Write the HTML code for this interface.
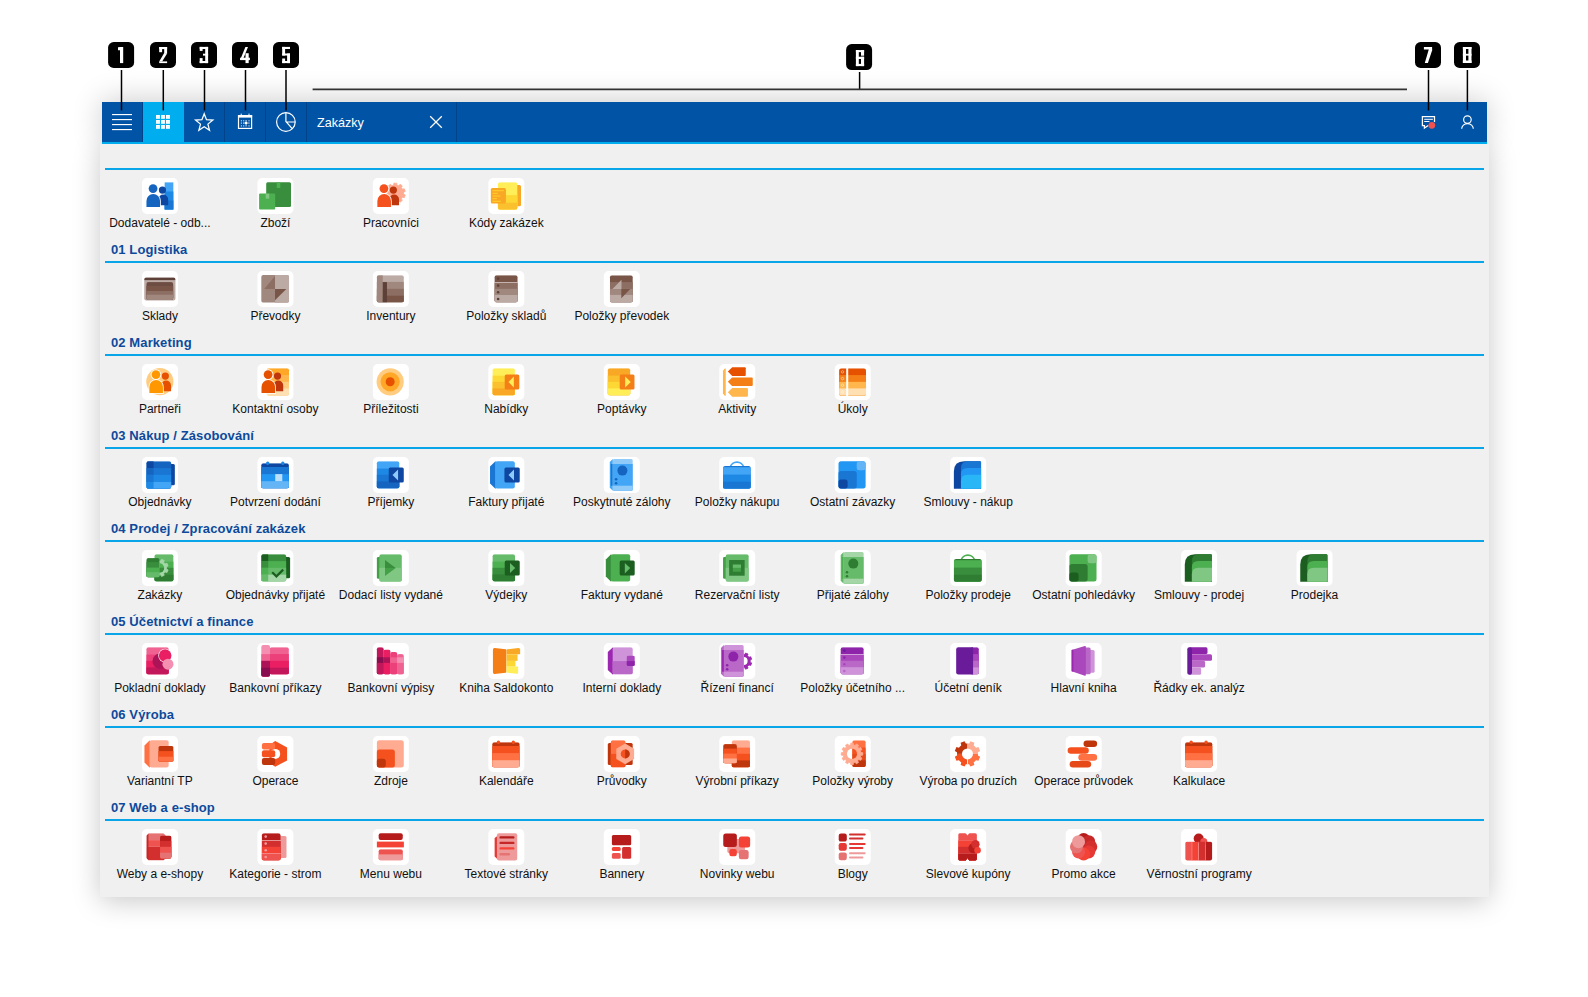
<!DOCTYPE html>
<html><head><meta charset="utf-8">
<style>
html,body{margin:0;padding:0;background:#fff;width:1588px;height:997px;overflow:hidden;position:relative;font-family:"Liberation Sans",sans-serif;}
.win{position:absolute;left:100px;top:144px;width:1389px;height:753px;background:#f0f0f0;box-shadow:0 4px 26px rgba(0,0,0,0.22);}
.win2{position:absolute;left:102px;top:102px;width:1385px;height:42px;box-shadow:0 -2px 30px rgba(0,0,0,0.2);}
.bar{position:absolute;left:102px;top:102px;width:1385px;height:40px;background:#0053a5;border-bottom:2px solid #00aeef;}
.st{position:absolute;left:111px;font-weight:bold;font-size:13px;color:#0c4a9c;letter-spacing:0.1px;white-space:nowrap;line-height:15px;}
.sl{position:absolute;left:105px;width:1379px;height:2px;background:#08a6e8;}
.it{position:absolute;width:38px;height:36px;}
.it svg{display:block}
.lb{position:absolute;width:120px;text-align:center;font-size:12px;color:#111;white-space:nowrap;line-height:14px;}
</style></head><body>
<div class="win2"></div><div class="win"></div>

<div class="bar">
 <div style="position:absolute;left:41px;top:0;width:41px;height:40px;background:#00aeef"></div>
 <div style="position:absolute;left:40px;top:0;width:1px;height:40px;background:#00438a"></div>
 <div style="position:absolute;left:122px;top:0;width:1px;height:40px;background:#00438a"></div>
 <div style="position:absolute;left:163px;top:0;width:1px;height:40px;background:#00438a"></div>
 <div style="position:absolute;left:204px;top:0;width:1px;height:40px;background:#00438a"></div>
 <div style="position:absolute;left:354px;top:0;width:1px;height:40px;background:#00438a"></div>
 <div style="position:absolute;left:215px;top:14px;font-size:12.6px;color:#fff;line-height:15px">Zakázky</div>
</div>
<svg style="position:absolute;left:0;top:0" width="1588" height="150" viewBox="0 0 1588 150"><rect x="112" y="114.0" width="20" height="1.15" fill="#fff"/><rect x="112" y="119.0" width="20" height="1.15" fill="#fff"/><rect x="112" y="124.0" width="20" height="1.15" fill="#fff"/><rect x="112" y="129.0" width="20" height="1.15" fill="#fff"/><rect x="156" y="115" width="3.9" height="3.8" fill="#fff"/><rect x="157.4" y="116.3" width="1.2" height="1.2" fill="#d8f0fb"/><rect x="156" y="120" width="3.9" height="3.8" fill="#fff"/><rect x="157.4" y="121.3" width="1.2" height="1.2" fill="#d8f0fb"/><rect x="156" y="125" width="3.9" height="3.8" fill="#fff"/><rect x="157.4" y="126.3" width="1.2" height="1.2" fill="#d8f0fb"/><rect x="161" y="115" width="3.9" height="3.8" fill="#fff"/><rect x="162.4" y="116.3" width="1.2" height="1.2" fill="#d8f0fb"/><rect x="161" y="120" width="3.9" height="3.8" fill="#fff"/><rect x="162.4" y="121.3" width="1.2" height="1.2" fill="#d8f0fb"/><rect x="161" y="125" width="3.9" height="3.8" fill="#fff"/><rect x="162.4" y="126.3" width="1.2" height="1.2" fill="#d8f0fb"/><rect x="166" y="115" width="3.9" height="3.8" fill="#fff"/><rect x="167.4" y="116.3" width="1.2" height="1.2" fill="#d8f0fb"/><rect x="166" y="120" width="3.9" height="3.8" fill="#fff"/><rect x="167.4" y="121.3" width="1.2" height="1.2" fill="#d8f0fb"/><rect x="166" y="125" width="3.9" height="3.8" fill="#fff"/><rect x="167.4" y="126.3" width="1.2" height="1.2" fill="#d8f0fb"/><polygon points="204.20,113.80 206.49,119.74 212.85,120.09 207.91,124.11 209.55,130.26 204.20,126.80 198.85,130.26 200.49,124.11 195.55,120.09 201.91,119.74" fill="none" stroke="#fff" stroke-width="1.25" stroke-linejoin="miter"/><rect x="238.5" y="115.6" width="13.1" height="12.8" fill="none" stroke="#fff" stroke-width="1.2"/><rect x="238" y="115" width="14.1" height="2.6" fill="#fff"/><rect x="240.7" y="113.6" width="1" height="2" fill="#fff"/><rect x="248.5" y="113.6" width="1" height="2" fill="#fff"/><rect x="240.85" y="120.25" width="1.1" height="1.1" fill="#fff" opacity="0.85"/><rect x="243.14999999999998" y="120.25" width="1.1" height="1.1" fill="#fff" opacity="0.85"/><rect x="245.54999999999998" y="120.25" width="1.1" height="1.1" fill="#fff" opacity="0.85"/><rect x="248.45" y="120.25" width="1.1" height="1.1" fill="#fff" opacity="0.85"/><rect x="240.85" y="122.55" width="1.1" height="1.1" fill="#fff" opacity="0.85"/><rect x="243.14999999999998" y="122.55" width="1.1" height="1.1" fill="#fff" opacity="0.85"/><rect x="248.45" y="122.55" width="1.1" height="1.1" fill="#fff" opacity="0.85"/><rect x="240.85" y="125.35000000000001" width="1.1" height="1.1" fill="#fff" opacity="0.85"/><rect x="243.14999999999998" y="125.35000000000001" width="1.1" height="1.1" fill="#fff" opacity="0.85"/><rect x="245.54999999999998" y="125.35000000000001" width="1.1" height="1.1" fill="#fff" opacity="0.85"/><rect x="248.45" y="125.35000000000001" width="1.1" height="1.1" fill="#fff" opacity="0.85"/><circle cx="246.1" cy="123.1" r="1.4" fill="#fff"/><path d="M246.1 120.5 V125.7 M243.5 123.1 H248.7" stroke="#fff" stroke-width="0.6" opacity="0.7"/><circle cx="285.9" cy="122" r="9.3" fill="none" stroke="#fff" stroke-width="1.2"/><path d="M285.9 112.7 V121.5 L292.2 128.6 M285.9 122 H295.2" fill="none" stroke="#fff" stroke-width="1.2"/><path d="M430.2 116.2 L441.8 127.8 M441.8 116.2 L430.2 127.8" stroke="#fff" stroke-width="1.25"/><path d="M1428.2 125.5 L1424.4 128.1 V125.6 H1422.4 V116.6 H1434.5 V122" fill="none" stroke="#fff" stroke-width="1.25" stroke-linejoin="miter"/><rect x="1424.2" y="118.8" width="8.7" height="1" fill="#fff"/><rect x="1424.2" y="121" width="5.2" height="1" fill="#fff"/><circle cx="1431.8" cy="125.3" r="3.4" fill="#EF5350"/><circle cx="1467.4" cy="119.6" r="3.8" fill="none" stroke="#fff" stroke-width="1.2"/><path d="M1461.7 128.8 A5.8 5.2 0 0 1 1473.3 128.8" fill="none" stroke="#fff" stroke-width="1.2"/></svg>
<div class="sl" style="top:168px"></div>
<div class="it" style="left:141px;top:178px"><svg width="38" height="36" viewBox="0 0 38 36"><g transform="translate(0.95,0)"><rect width="36" height="36" rx="5" fill="#fff"/><clipPath id="c1"><rect x="22.7" y="4.2" width="8.7" height="27.5" rx="0"/></clipPath><g clip-path="url(#c1)"><rect x="21.70" y="4.20" width="10.70" height="27.50" rx="0" fill="#42A5F5"/><rect x="21.70" y="13.50" width="10.70" height="18.20" rx="0" fill="#1E88E5"/><rect x="21.70" y="22.50" width="10.70" height="9.20" rx="0" fill="#1976D2"/></g><circle cx="20.50" cy="12.10" r="3.60" fill="#0D47A1"/><path d="M16.4 27.2 V21.4 A4.8 4.8 0 0 1 26.2 21.4 V27.2 Z" fill="#0D47A1"/><circle cx="11.10" cy="10.60" r="5.30" fill="#fff"/><path d="M3.7 29.8 V22.9 A6.9 6.9 0 0 1 18.9 22.9 V29.8 Z" fill="#fff"/><circle cx="11.10" cy="10.60" r="4.40" fill="#1565C0"/><path d="M4.5 29.0 V22.9 A6.8 6.8 0 0 1 18.1 22.9 V29.0 Z" fill="#1565C0"/></g></svg></div>
<div class="lb" style="left:99.9px;top:216px">Dodavatelé - odb...</div>
<div class="it" style="left:257px;top:178px"><svg width="38" height="36" viewBox="0 0 38 36"><g transform="translate(0.41,0)"><rect width="36" height="36" rx="5" fill="#fff"/><rect x="8.80" y="4.20" width="24.80" height="24.80" rx="1.5" fill="#388E3C"/><rect x="19.30" y="4.20" width="3.60" height="5.80" rx="0" fill="#4CAF50"/><rect x="1.70" y="15.60" width="16.10" height="15.80" rx="1" fill="#4CAF50"/><rect x="8.30" y="15.60" width="3.50" height="5.10" rx="0" fill="#81C784"/></g></svg></div>
<div class="lb" style="left:215.4px;top:216px">Zboží</div>
<div class="it" style="left:372px;top:178px"><svg width="38" height="36" viewBox="0 0 38 36"><g transform="translate(0.87,0)"><rect width="36" height="36" rx="5" fill="#fff"/><polygon points="20.79,7.06 20.98,5.20 23.82,5.20 24.01,7.06 25.89,7.67 27.13,6.27 29.43,7.95 28.49,9.56 29.65,11.16 31.47,10.76 32.35,13.46 30.64,14.21 30.64,16.19 32.35,16.94 31.47,19.64 29.65,19.24 28.49,20.84 29.43,22.45 27.13,24.13 25.89,22.73 24.01,23.34 23.82,25.20 20.98,25.20 20.79,23.34 18.91,22.73 17.67,24.13 15.37,22.45 16.31,20.84 15.15,19.24 13.33,19.64 12.45,16.94 14.16,16.19 14.16,14.21 12.45,13.46 13.33,10.76 15.15,11.16 16.31,9.56 15.37,7.95 17.67,6.27 18.91,7.67" fill="#FFAB91" stroke="#FFAB91" stroke-width="0.8" stroke-linejoin="round"/><circle cx="20.50" cy="12.10" r="3.60" fill="#BF360C"/><path d="M16.4 27.2 V21.4 A4.8 4.8 0 0 1 26.2 21.4 V27.2 Z" fill="#BF360C"/><circle cx="11.10" cy="10.60" r="5.30" fill="#fff"/><path d="M3.7 29.8 V22.9 A6.9 6.9 0 0 1 18.9 22.9 V29.8 Z" fill="#fff"/><circle cx="11.10" cy="10.60" r="4.40" fill="#F4511E"/><path d="M4.5 29.0 V22.9 A6.8 6.8 0 0 1 18.1 22.9 V29.0 Z" fill="#F4511E"/></g></svg></div>
<div class="lb" style="left:330.9px;top:216px">Pracovníci</div>
<div class="it" style="left:488px;top:178px"><svg width="38" height="36" viewBox="0 0 38 36"><g transform="translate(0.33,0)"><rect width="36" height="36" rx="5" fill="#fff"/><rect x="26.00" y="7.00" width="6.70" height="21.20" rx="1.5" fill="#F9A825"/><clipPath id="c2"><rect x="9.6" y="4.2" width="19.4" height="27.5" rx="2"/></clipPath><g clip-path="url(#c2)"><rect x="8.60" y="4.20" width="21.40" height="27.50" rx="0" fill="#FFEE58"/><rect x="8.60" y="17.10" width="21.40" height="14.60" rx="0" fill="#FDD835"/><rect x="8.60" y="24.70" width="21.40" height="7.00" rx="0" fill="#FBC02D"/></g><rect x="2.50" y="10.00" width="15.10" height="15.40" rx="1.5" fill="#F9A825"/><rect x="3.30" y="10.80" width="13.50" height="13.80" rx="1" fill="#F9A825"/><rect x="4.20" y="12.00" width="11.30" height="1.20" rx="0" fill="#FFCA28"/><rect x="4.20" y="14.80" width="5.30" height="1.20" rx="0" fill="#FFCA28"/><rect x="4.20" y="17.40" width="7.80" height="1.20" rx="0" fill="#FFCA28"/><rect x="4.20" y="20.00" width="4.30" height="1.20" rx="0" fill="#FFCA28"/><rect x="4.20" y="22.70" width="8.30" height="1.20" rx="0" fill="#FFCA28"/></g></svg></div>
<div class="lb" style="left:446.3px;top:216px">Kódy zakázek</div>
<div class="st" style="top:242px">01 Logistika</div>
<div class="sl" style="top:261px"></div>
<div class="it" style="left:141px;top:271px"><svg width="38" height="36" viewBox="0 0 38 36"><g transform="translate(0.95,0)"><rect width="36" height="36" rx="5" fill="#fff"/><rect x="2.30" y="6.50" width="31.20" height="22.90" rx="2" fill="#BCAAA4"/><clipPath id="c3"><rect x="2.3" y="6.5" width="31.2" height="22.9" rx="2"/></clipPath><g clip-path="url(#c3)"><rect x="2.30" y="6.50" width="31.20" height="2.60" rx="0" fill="#5D4037"/></g><clipPath id="c4"><rect x="4.5" y="11.1" width="26.7" height="17.9" rx="2"/></clipPath><g clip-path="url(#c4)"><rect x="3.50" y="11.10" width="28.70" height="17.90" rx="0" fill="#6D4C41"/><rect x="3.50" y="15.00" width="28.70" height="14.00" rx="0" fill="#795548"/><rect x="3.50" y="20.00" width="28.70" height="9.00" rx="0" fill="#8D6E63"/><rect x="3.50" y="23.70" width="28.70" height="5.30" rx="0" fill="#A1887F"/></g></g></svg></div>
<div class="lb" style="left:99.9px;top:309px">Sklady</div>
<div class="it" style="left:257px;top:271px"><svg width="38" height="36" viewBox="0 0 38 36"><g transform="translate(0.41,0)"><rect width="36" height="36" rx="5" fill="#fff"/><clipPath id="c5"><rect x="3.9" y="4" width="27.700000000000003" height="27.7" rx="2"/></clipPath><g clip-path="url(#c5)"><rect x="2.90" y="4.00" width="29.70" height="27.70" rx="0" fill="#A1887F"/></g><clipPath id="c6"><rect x="3.9" y="4" width="27.7" height="27.7" rx="2"/></clipPath><g clip-path="url(#c6)"><rect x="17.60" y="3.00" width="14.40" height="29.00" rx="0" fill="#BCAAA4"/></g><polygon points="17.60,5.00 17.60,17.90 6.80,17.90" fill="#8D6E63"/><polygon points="17.60,17.90 28.90,17.90 17.60,29.20" fill="#795548"/></g></svg></div>
<div class="lb" style="left:215.4px;top:309px">Převodky</div>
<div class="it" style="left:372px;top:271px"><svg width="38" height="36" viewBox="0 0 38 36"><g transform="translate(0.87,0)"><rect width="36" height="36" rx="5" fill="#fff"/><clipPath id="c7"><rect x="4" y="4.2" width="26.9" height="27.2" rx="2"/></clipPath><g clip-path="url(#c7)"><rect x="3.00" y="4.20" width="28.90" height="27.20" rx="0" fill="#BCAAA4"/><rect x="3.00" y="10.90" width="28.90" height="20.50" rx="0" fill="#A1887F"/><rect x="3.00" y="17.80" width="28.90" height="13.60" rx="0" fill="#8D6E63"/><rect x="3.00" y="24.70" width="28.90" height="6.70" rx="0" fill="#795548"/></g><clipPath id="c8"><rect x="4" y="4.2" width="26.9" height="27.2" rx="2"/></clipPath><g clip-path="url(#c8)"><rect x="4.00" y="4.20" width="5.90" height="27.20" rx="0" fill="#A1887F"/><rect x="9.90" y="11.10" width="4.20" height="20.30" rx="0" fill="#5D4037"/></g></g></svg></div>
<div class="lb" style="left:330.9px;top:309px">Inventury</div>
<div class="it" style="left:488px;top:271px"><svg width="38" height="36" viewBox="0 0 38 36"><g transform="translate(0.33,0)"><rect width="36" height="36" rx="5" fill="#fff"/><clipPath id="c9"><rect x="6.3" y="4.2" width="22.9" height="27.2" rx="2"/></clipPath><g clip-path="url(#c9)"><rect x="5.30" y="4.20" width="24.90" height="27.20" rx="0" fill="#795548"/><rect x="5.30" y="11.20" width="24.90" height="20.20" rx="0" fill="#8D6E63"/><rect x="5.30" y="17.80" width="24.90" height="13.60" rx="0" fill="#A1887F"/><rect x="5.30" y="24.00" width="24.90" height="7.40" rx="0" fill="#BCAAA4"/></g><rect x="6.00" y="11.10" width="23.50" height="0.50" rx="0" fill="#fff"/><circle cx="9.80" cy="7.60" r="1.30" fill="#5D4037"/><circle cx="9.80" cy="14.60" r="1.30" fill="#5D4037"/><circle cx="9.80" cy="21.20" r="1.30" fill="#5D4037"/><circle cx="9.80" cy="28.00" r="1.30" fill="#5D4037"/></g></svg></div>
<div class="lb" style="left:446.3px;top:309px">Položky skladů</div>
<div class="it" style="left:603px;top:271px"><svg width="38" height="36" viewBox="0 0 38 36"><g transform="translate(0.79,0)"><rect width="36" height="36" rx="5" fill="#fff"/><clipPath id="c10"><rect x="6.2" y="4.3" width="22.7" height="27.2" rx="2"/></clipPath><g clip-path="url(#c10)"><rect x="5.20" y="4.30" width="24.70" height="27.20" rx="0" fill="#795548"/><rect x="5.20" y="11.10" width="24.70" height="20.40" rx="0" fill="#8D6E63"/><rect x="5.20" y="17.90" width="24.70" height="13.60" rx="0" fill="#A1887F"/><rect x="5.20" y="23.90" width="24.70" height="7.60" rx="0" fill="#BCAAA4"/></g><polygon points="17.70,8.80 17.70,17.90 8.70,17.90" fill="#BCAAA4"/><polygon points="17.50,17.90 26.50,17.90 17.50,27.20" fill="#795548"/></g></svg></div>
<div class="lb" style="left:561.8px;top:309px">Položky převodek</div>
<div class="st" style="top:335px">02 Marketing</div>
<div class="sl" style="top:354px"></div>
<div class="it" style="left:141px;top:364px"><svg width="38" height="36" viewBox="0 0 38 36"><g transform="translate(0.95,0)"><rect width="36" height="36" rx="5" fill="#fff"/><circle cx="17.90" cy="17.60" r="13.60" fill="#FFCC80"/><circle cx="23.40" cy="12.10" r="3.60" fill="#E65100"/><path d="M19.299999999999997 27.2 V21.4 A4.8 4.8 0 0 1 29.099999999999998 21.4 V27.2 Z" fill="#E65100"/><circle cx="14.00" cy="10.60" r="5.30" fill="#fff"/><path d="M6.6 29.8 V22.9 A6.9 6.9 0 0 1 21.799999999999997 22.9 V29.8 Z" fill="#fff"/><circle cx="14.00" cy="10.60" r="4.40" fill="#FF9800"/><path d="M7.4 29.0 V22.9 A6.8 6.8 0 0 1 21.0 22.9 V29.0 Z" fill="#FF9800"/></g></svg></div>
<div class="lb" style="left:99.9px;top:402px">Partneři</div>
<div class="it" style="left:257px;top:364px"><svg width="38" height="36" viewBox="0 0 38 36"><g transform="translate(0.41,0)"><rect width="36" height="36" rx="5" fill="#fff"/><clipPath id="c11"><rect x="9.3" y="4.2" width="22.3" height="27.2" rx="2"/></clipPath><g clip-path="url(#c11)"><rect x="8.30" y="4.20" width="24.30" height="27.20" rx="0" fill="#FFA726"/><rect x="8.30" y="11.10" width="24.30" height="20.30" rx="0" fill="#FFB74D"/><rect x="8.30" y="17.80" width="24.30" height="13.60" rx="0" fill="#FFCC80"/><rect x="8.30" y="24.50" width="24.30" height="6.90" rx="0" fill="#FFE0B2"/></g><circle cx="20.10" cy="12.10" r="3.60" fill="#BF360C"/><path d="M15.999999999999998 27.2 V21.4 A4.8 4.8 0 0 1 25.8 21.4 V27.2 Z" fill="#BF360C"/><circle cx="10.70" cy="10.60" r="5.30" fill="#fff"/><path d="M3.3000000000000003 29.8 V22.9 A6.9 6.9 0 0 1 18.5 22.9 V29.8 Z" fill="#fff"/><circle cx="10.70" cy="10.60" r="4.40" fill="#E65100"/><path d="M4.1 29.0 V22.9 A6.8 6.8 0 0 1 17.700000000000003 22.9 V29.0 Z" fill="#E65100"/></g></svg></div>
<div class="lb" style="left:215.4px;top:402px">Kontaktní osoby</div>
<div class="it" style="left:372px;top:364px"><svg width="38" height="36" viewBox="0 0 38 36"><g transform="translate(0.87,0)"><rect width="36" height="36" rx="5" fill="#fff"/><circle cx="17.30" cy="17.80" r="13.60" fill="#FFCC80"/><circle cx="17.30" cy="17.80" r="9.60" fill="#FFA726"/><circle cx="17.30" cy="17.80" r="4.50" fill="#E65100"/></g></svg></div>
<div class="lb" style="left:330.9px;top:402px">Příležitosti</div>
<div class="it" style="left:488px;top:364px"><svg width="38" height="36" viewBox="0 0 38 36"><g transform="translate(0.33,0)"><rect width="36" height="36" rx="5" fill="#fff"/><clipPath id="c12"><rect x="4.3" y="4.2" width="22.2" height="27.2" rx="2"/></clipPath><g clip-path="url(#c12)"><rect x="3.30" y="4.20" width="24.20" height="27.20" rx="0" fill="#FFEE58"/><rect x="3.30" y="11.60" width="24.20" height="19.80" rx="0" fill="#FDD835"/><rect x="3.30" y="17.80" width="24.20" height="13.60" rx="0" fill="#FBC02D"/><rect x="3.30" y="24.40" width="24.20" height="7.00" rx="0" fill="#F9A825"/></g><rect x="16.40" y="10.40" width="14.60" height="15.00" rx="1.5" fill="#F57F17"/><polygon points="25.50,12.60 25.50,23.40 20.20,17.90" fill="#FFEE58"/></g></svg></div>
<div class="lb" style="left:446.3px;top:402px">Nabídky</div>
<div class="it" style="left:603px;top:364px"><svg width="38" height="36" viewBox="0 0 38 36"><g transform="translate(0.79,0)"><rect width="36" height="36" rx="5" fill="#fff"/><clipPath id="c13"><rect x="4" y="4.2" width="22.4" height="27.2" rx="2"/></clipPath><g clip-path="url(#c13)"><rect x="3.00" y="4.20" width="24.40" height="27.20" rx="0" fill="#F9A825"/><rect x="3.00" y="11.60" width="24.40" height="19.80" rx="0" fill="#FBC02D"/><rect x="3.00" y="17.80" width="24.40" height="13.60" rx="0" fill="#FDD835"/><rect x="3.00" y="24.40" width="24.40" height="7.00" rx="0" fill="#FFEE58"/></g><rect x="15.90" y="10.40" width="14.80" height="15.00" rx="1.5" fill="#F57F17"/><polygon points="21.40,12.60 21.40,23.40 27.00,17.90" fill="#FFEE58"/></g></svg></div>
<div class="lb" style="left:561.8px;top:402px">Poptávky</div>
<div class="it" style="left:719px;top:364px"><svg width="38" height="36" viewBox="0 0 38 36"><g transform="translate(0.25,0)"><rect width="36" height="36" rx="5" fill="#fff"/><polygon points="5.50,4.50 6.50,4.50 6.50,31.70 5.50,31.70 3.70,29.50 3.70,6.70" fill="#FFB74D"/><path d="M8.6 7.550000000000001 L12.95 3.2 H25.5 Q26.5 3.2 26.5 4.2 V10.9 Q26.5 11.9 25.5 11.9 H12.95 Z" fill="#E65100"/><path d="M8.6 17.8 L12.8 13.6 H32.5 Q33.5 13.6 33.5 14.6 V21 Q33.5 22 32.5 22 H12.8 Z" fill="#F57F17"/><path d="M8.6 28.35 L12.950000000000001 24 H27.7 Q28.7 24 28.7 25 V31.700000000000003 Q28.7 32.7 27.7 32.7 H12.950000000000001 Z" fill="#FFB74D"/></g></svg></div>
<div class="lb" style="left:677.2px;top:402px">Aktivity</div>
<div class="it" style="left:834px;top:364px"><svg width="38" height="36" viewBox="0 0 38 36"><g transform="translate(0.71,0)"><rect width="36" height="36" rx="5" fill="#fff"/><clipPath id="c14"><rect x="4.4" y="4.3" width="26.9" height="27.4" rx="2.5"/></clipPath><g clip-path="url(#c14)"><rect x="3.40" y="4.30" width="28.90" height="27.40" rx="0" fill="#E65100"/><rect x="3.40" y="11.10" width="28.90" height="20.60" rx="0" fill="#F57F17"/><rect x="3.40" y="17.90" width="28.90" height="13.80" rx="0" fill="#FFB74D"/><rect x="3.40" y="24.40" width="28.90" height="7.30" rx="0" fill="#FFE0B2"/></g><rect x="11.50" y="4.00" width="2.00" height="28.00" rx="0" fill="#fff"/><circle cx="7.8" cy="7.9" r="1.2" fill="none" stroke="#fff" stroke-opacity="0.75" stroke-width="0.6"/><circle cx="7.8" cy="14.6" r="1.2" fill="none" stroke="#fff" stroke-opacity="0.75" stroke-width="0.6"/><circle cx="7.8" cy="21.2" r="1.2" fill="none" stroke="#fff" stroke-opacity="0.75" stroke-width="0.6"/><circle cx="7.8" cy="28" r="1.2" fill="none" stroke="#fff" stroke-opacity="0.75" stroke-width="0.6"/></g></svg></div>
<div class="lb" style="left:792.7px;top:402px">Úkoly</div>
<div class="st" style="top:428px">03 Nákup / Zásobování</div>
<div class="sl" style="top:447px"></div>
<div class="it" style="left:141px;top:457px"><svg width="38" height="36" viewBox="0 0 38 36"><g transform="translate(0.95,0)"><rect width="36" height="36" rx="5" fill="#fff"/><rect x="27.00" y="7.00" width="5.90" height="21.20" rx="1.5" fill="#0D47A1"/><clipPath id="c15"><rect x="4.5" y="4.2" width="24.7" height="27.5" rx="2"/></clipPath><g clip-path="url(#c15)"><rect x="3.50" y="4.20" width="26.70" height="27.50" rx="0" fill="#1565C0"/><rect x="3.50" y="11.10" width="26.70" height="20.60" rx="0" fill="#1976D2"/><rect x="3.50" y="17.80" width="26.70" height="13.90" rx="0" fill="#1E88E5"/><rect x="3.50" y="25.00" width="26.70" height="6.70" rx="0" fill="#42A5F5"/></g><clipPath id="c16"><rect x="4.5" y="4.2" width="24.7" height="27.5" rx="2"/></clipPath><g clip-path="url(#c16)"><rect x="4.50" y="4.20" width="7.10" height="6.90" rx="0" fill="#0D47A1"/><rect x="4.50" y="11.10" width="7.10" height="6.70" rx="0" fill="#1565C0"/><rect x="4.50" y="17.80" width="7.10" height="7.20" rx="0" fill="#1976D2"/><rect x="4.50" y="25.00" width="7.10" height="6.70" rx="0" fill="#1E88E5"/></g></g></svg></div>
<div class="lb" style="left:99.9px;top:495px">Objednávky</div>
<div class="it" style="left:257px;top:457px"><svg width="38" height="36" viewBox="0 0 38 36"><g transform="translate(0.41,0)"><rect width="36" height="36" rx="5" fill="#fff"/><clipPath id="c17"><rect x="3.9" y="6.2" width="27.5" height="25.2" rx="2"/></clipPath><g clip-path="url(#c17)"><rect x="2.90" y="6.20" width="29.50" height="25.20" rx="0" fill="#0D47A1"/><rect x="2.90" y="10.00" width="29.50" height="21.40" rx="0" fill="#1976D2"/><rect x="2.90" y="17.10" width="29.50" height="14.30" rx="0" fill="#2196F3"/><rect x="2.90" y="24.20" width="29.50" height="7.20" rx="0" fill="#64B5F6"/></g><rect x="17.80" y="17.10" width="7.10" height="7.10" rx="0" fill="#BBDEFB"/><circle cx="10.30" cy="6.20" r="1.70" fill="#1E88E5"/><circle cx="25.40" cy="6.20" r="1.70" fill="#1E88E5"/></g></svg></div>
<div class="lb" style="left:215.4px;top:495px">Potvrzení dodání</div>
<div class="it" style="left:372px;top:457px"><svg width="38" height="36" viewBox="0 0 38 36"><g transform="translate(0.87,0)"><rect width="36" height="36" rx="5" fill="#fff"/><clipPath id="c18"><rect x="4" y="4.2" width="22.4" height="27.2" rx="2"/></clipPath><g clip-path="url(#c18)"><rect x="3.00" y="4.20" width="24.40" height="27.20" rx="0" fill="#42A5F5"/><rect x="3.00" y="11.60" width="24.40" height="19.80" rx="0" fill="#1E88E5"/><rect x="3.00" y="17.80" width="24.40" height="13.60" rx="0" fill="#1976D2"/><rect x="3.00" y="24.40" width="24.40" height="7.00" rx="0" fill="#1565C0"/></g><rect x="15.90" y="10.40" width="15.00" height="15.00" rx="1.5" fill="#0D47A1"/><polygon points="25.20,12.60 25.20,23.40 19.60,17.90" fill="#90CAF9"/></g></svg></div>
<div class="lb" style="left:330.9px;top:495px">Příjemky</div>
<div class="it" style="left:488px;top:457px"><svg width="38" height="36" viewBox="0 0 38 36"><g transform="translate(0.33,0)"><rect width="36" height="36" rx="5" fill="#fff"/><polygon points="7.50,4.50 7.50,31.50 6.80,31.50 1.70,26.50 1.70,9.50 6.80,4.50" fill="#1976D2"/><rect x="6.80" y="4.20" width="19.70" height="27.20" rx="2" fill="#42A5F5"/><rect x="16.10" y="10.40" width="15.30" height="15.00" rx="1.5" fill="#0D47A1"/><polygon points="25.70,12.60 25.70,23.40 20.20,17.90" fill="#90CAF9"/></g></svg></div>
<div class="lb" style="left:446.3px;top:495px">Faktury přijaté</div>
<div class="it" style="left:603px;top:457px"><svg width="38" height="36" viewBox="0 0 38 36"><g transform="translate(0.79,0)"><rect width="36" height="36" rx="5" fill="#fff"/><polygon points="9.00,2.00 6.00,5.00 6.00,30.80 9.00,33.80" fill="#42A5F5"/><rect x="7.00" y="7.00" width="2.00" height="21.70" rx="0" fill="#1976D2"/><clipPath id="c19"><rect x="9" y="2" width="19.9" height="31.799999999999997" rx="1.5"/></clipPath><g clip-path="url(#c19)"><rect x="8.00" y="2.00" width="21.90" height="31.80" rx="0" fill="#90CAF9"/><rect x="8.00" y="7.00" width="21.90" height="26.80" rx="0" fill="#42A5F5"/><rect x="8.00" y="28.70" width="21.90" height="5.10" rx="0" fill="#90CAF9"/></g><circle cx="18.60" cy="13.60" r="5.00" fill="#1565C0"/><circle cx="12.30" cy="22.20" r="1.30" fill="#1565C0"/><circle cx="12.30" cy="26.20" r="1.30" fill="#1565C0"/></g></svg></div>
<div class="lb" style="left:561.8px;top:495px">Poskytnuté zálohy</div>
<div class="it" style="left:719px;top:457px"><svg width="38" height="36" viewBox="0 0 38 36"><g transform="translate(0.25,0)"><rect width="36" height="36" rx="5" fill="#fff"/><path d="M10.9 10.5 A6.9 6.5 0 0 1 24.5 10.5" fill="none" stroke="#42A5F5" stroke-width="1.6"/><clipPath id="c20"><rect x="3.8" y="8.9" width="27.599999999999998" height="22.799999999999997" rx="2"/></clipPath><g clip-path="url(#c20)"><rect x="2.80" y="8.90" width="29.60" height="22.80" rx="0" fill="#1976D2"/><rect x="2.80" y="10.20" width="29.60" height="21.50" rx="0" fill="#42A5F5"/><rect x="2.80" y="17.60" width="29.60" height="14.10" rx="0" fill="#1E88E5"/><rect x="2.80" y="24.70" width="29.60" height="7.00" rx="0" fill="#1976D2"/></g></g></svg></div>
<div class="lb" style="left:677.2px;top:495px">Položky nákupu</div>
<div class="it" style="left:834px;top:457px"><svg width="38" height="36" viewBox="0 0 38 36"><g transform="translate(0.71,0)"><rect width="36" height="36" rx="5" fill="#fff"/><rect x="3.80" y="4.20" width="27.10" height="27.20" rx="2.5" fill="#2196F3"/><rect x="22.00" y="4.20" width="8.90" height="9.10" rx="2.5" fill="#64B5F6"/><rect x="3.80" y="13.90" width="18.20" height="17.50" rx="2.5" fill="#1976D2"/><rect x="3.80" y="22.40" width="9.10" height="9.00" rx="2.5" fill="#0D47A1"/></g></svg></div>
<div class="lb" style="left:792.7px;top:495px">Ostatní závazky</div>
<div class="it" style="left:950px;top:457px"><svg width="38" height="36" viewBox="0 0 38 36"><g transform="translate(0.17,0)"><rect width="36" height="36" rx="5" fill="#fff"/><path d="M3.7 31.7 V14.5 Q3.7 4.2 14 4.2 H29.5 Q30.9 4.2 30.9 5.6 V31.7 Z" fill="#0D47A1"/><path d="M10.8 31.7 V11 Q10.8 4.2 17.6 4.2 H29.5 Q30.9 4.2 30.9 5.6 V31.7 Z" fill="#1976D2"/><path d="M10.8 31.7 V17.5 Q10.8 11.1 17.2 11.1 H30.9 V31.7 Z" fill="#2196F3"/><path d="M10.8 31.7 V24.2 Q10.8 17.8 17.2 17.8 H30.9 V30.3 Q30.9 31.7 29.5 31.7 Z" fill="#29B6F6"/></g></svg></div>
<div class="lb" style="left:908.2px;top:495px">Smlouvy - nákup</div>
<div class="st" style="top:521px">04 Prodej / Zpracování zakázek</div>
<div class="sl" style="top:540px"></div>
<div class="it" style="left:141px;top:550px"><svg width="38" height="36" viewBox="0 0 38 36"><g transform="translate(0.95,0)"><rect width="36" height="36" rx="5" fill="#fff"/><clipPath id="c21"><rect x="12.6" y="4.2" width="18.799999999999997" height="27.2" rx="2"/></clipPath><g clip-path="url(#c21)"><rect x="11.60" y="4.20" width="20.80" height="27.20" rx="0" fill="#66BB6A"/><rect x="11.60" y="11.60" width="20.80" height="19.80" rx="0" fill="#4CAF50"/><rect x="11.60" y="17.80" width="20.80" height="13.60" rx="0" fill="#388E3C"/><rect x="11.60" y="24.70" width="20.80" height="6.70" rx="0" fill="#2E7D32"/></g><clipPath id="c22"><rect x="4.5" y="8.1" width="13.100000000000001" height="19.299999999999997" rx="2"/></clipPath><g clip-path="url(#c22)"><rect x="3.50" y="8.10" width="15.10" height="19.30" rx="0" fill="#2E7D32"/><rect x="3.50" y="12.10" width="15.10" height="15.30" rx="0" fill="#388E3C"/><rect x="3.50" y="17.60" width="15.10" height="9.80" rx="0" fill="#4CAF50"/><rect x="3.50" y="22.20" width="15.10" height="5.20" rx="0" fill="#66BB6A"/></g><clipPath id="c24"><rect x="17.6" y="0" width="20" height="36"/></clipPath><g clip-path="url(#c24)"><polygon points="18.70,10.99 19.59,9.33 22.26,10.43 21.71,12.24 23.26,13.79 25.07,13.24 26.17,15.91 24.51,16.80 24.51,19.00 26.17,19.89 25.07,22.56 23.26,22.01 21.71,23.56 22.26,25.37 19.59,26.47 18.70,24.81 16.50,24.81 15.61,26.47 12.94,25.37 13.49,23.56 11.94,22.01 10.13,22.56 9.03,19.89 10.69,19.00 10.69,16.80 9.03,15.91 10.13,13.24 11.94,13.79 13.49,12.24 12.94,10.43 15.61,9.33 16.50,10.99" fill="#A5D6A7" stroke="#A5D6A7" stroke-width="0.8" stroke-linejoin="round"/><circle cx="17.60" cy="17.90" r="4.60" fill="#4CAF50"/><clipPath id="c23"><rect x="0" y="17.8" width="36" height="20"/></clipPath><g clip-path="url(#c23)"><circle cx="17.60" cy="17.90" r="4.60" fill="#388E3C"/></g></g></g></svg></div>
<div class="lb" style="left:99.9px;top:588px">Zakázky</div>
<div class="it" style="left:257px;top:550px"><svg width="38" height="36" viewBox="0 0 38 36"><g transform="translate(0.41,0)"><rect width="36" height="36" rx="5" fill="#fff"/><rect x="26.50" y="7.00" width="6.20" height="21.20" rx="1.5" fill="#1B5E20"/><clipPath id="c25"><rect x="3.9" y="4.2" width="24.8" height="27.2" rx="2"/></clipPath><g clip-path="url(#c25)"><rect x="2.90" y="4.20" width="26.80" height="27.20" rx="0" fill="#388E3C"/><rect x="2.90" y="11.10" width="26.80" height="20.30" rx="0" fill="#4CAF50"/><rect x="2.90" y="17.80" width="26.80" height="13.60" rx="0" fill="#66BB6A"/><rect x="2.90" y="24.70" width="26.80" height="6.70" rx="0" fill="#A5D6A7"/></g><clipPath id="c26"><rect x="3.9" y="4.2" width="24.8" height="27.2" rx="2"/></clipPath><g clip-path="url(#c26)"><rect x="3.90" y="4.20" width="6.90" height="6.90" rx="0" fill="#1B5E20"/><rect x="3.90" y="11.10" width="6.90" height="6.70" rx="0" fill="#388E3C"/><rect x="3.90" y="17.80" width="6.90" height="6.90" rx="0" fill="#4CAF50"/><rect x="3.90" y="24.70" width="6.90" height="6.70" rx="0" fill="#66BB6A"/></g><path d="M14.8 22.2 L19 26.4 L25.8 19.6" fill="none" stroke="#1B5E20" stroke-width="2.2"/></g></svg></div>
<div class="lb" style="left:215.4px;top:588px">Objednávky přijaté</div>
<div class="it" style="left:372px;top:550px"><svg width="38" height="36" viewBox="0 0 38 36"><g transform="translate(0.87,0)"><rect width="36" height="36" rx="5" fill="#fff"/><rect x="4.00" y="7.00" width="4.00" height="21.70" rx="1.2" fill="#43A047"/><clipPath id="c27"><rect x="6.5" y="4.2" width="22.4" height="27.5" rx="2"/></clipPath><g clip-path="url(#c27)"><rect x="5.50" y="4.20" width="24.40" height="27.50" rx="0" fill="#66BB6A"/><rect x="5.50" y="17.80" width="24.40" height="13.90" rx="0" fill="#81C784"/></g><polygon points="12.10,10.00 22.90,17.90 12.10,17.90" fill="#388E3C"/><polygon points="12.10,17.90 22.90,17.90 12.10,26.00" fill="#43A047"/></g></svg></div>
<div class="lb" style="left:330.9px;top:588px">Dodací listy vydané</div>
<div class="it" style="left:488px;top:550px"><svg width="38" height="36" viewBox="0 0 38 36"><g transform="translate(0.33,0)"><rect width="36" height="36" rx="5" fill="#fff"/><clipPath id="c28"><rect x="4.3" y="4.2" width="22.4" height="27.2" rx="2"/></clipPath><g clip-path="url(#c28)"><rect x="3.30" y="4.20" width="24.40" height="27.20" rx="0" fill="#66BB6A"/><rect x="3.30" y="11.60" width="24.40" height="19.80" rx="0" fill="#4CAF50"/><rect x="3.30" y="17.80" width="24.40" height="13.60" rx="0" fill="#388E3C"/><rect x="3.30" y="24.40" width="24.40" height="7.00" rx="0" fill="#2E7D32"/></g><rect x="16.40" y="10.40" width="15.00" height="15.00" rx="1.5" fill="#1B5E20"/><polygon points="21.70,13.10 21.70,23.00 26.90,17.90" fill="#66BB6A"/></g></svg></div>
<div class="lb" style="left:446.3px;top:588px">Výdejky</div>
<div class="it" style="left:603px;top:550px"><svg width="38" height="36" viewBox="0 0 38 36"><g transform="translate(0.79,0)"><rect width="36" height="36" rx="5" fill="#fff"/><polygon points="7.50,4.50 7.50,31.50 7.00,31.50 2.00,26.50 2.00,9.50 7.00,4.50" fill="#388E3C"/><rect x="7.00" y="4.20" width="19.40" height="27.20" rx="2" fill="#4CAF50"/><rect x="15.90" y="10.40" width="15.00" height="15.00" rx="1.5" fill="#1B5E20"/><polygon points="21.00,12.90 21.00,23.40 26.40,17.90" fill="#66BB6A"/></g></svg></div>
<div class="lb" style="left:561.8px;top:588px">Faktury vydané</div>
<div class="it" style="left:719px;top:550px"><svg width="38" height="36" viewBox="0 0 38 36"><g transform="translate(0.25,0)"><rect width="36" height="36" rx="5" fill="#fff"/><rect x="3.80" y="7.00" width="4.20" height="21.70" rx="1.2" fill="#43A047"/><clipPath id="c29"><rect x="6.5" y="4.2" width="22.9" height="27.5" rx="2"/></clipPath><g clip-path="url(#c29)"><rect x="5.50" y="4.20" width="24.90" height="27.50" rx="0" fill="#66BB6A"/><rect x="5.50" y="17.80" width="24.90" height="13.90" rx="0" fill="#81C784"/></g><rect x="9.90" y="10.00" width="15.50" height="15.70" rx="0" fill="#2E7D32"/><rect x="13.60" y="14.60" width="8.10" height="7.10" rx="0" fill="#43A047"/><rect x="13.60" y="14.60" width="8.10" height="3.20" rx="0" fill="#66BB6A"/></g></svg></div>
<div class="lb" style="left:677.2px;top:588px">Rezervační listy</div>
<div class="it" style="left:834px;top:550px"><svg width="38" height="36" viewBox="0 0 38 36"><g transform="translate(0.71,0)"><rect width="36" height="36" rx="5" fill="#fff"/><polygon points="9.00,2.00 6.00,5.00 6.00,30.80 9.00,33.80" fill="#66BB6A"/><rect x="7.00" y="7.00" width="2.00" height="21.70" rx="0" fill="#4CAF50"/><clipPath id="c30"><rect x="9" y="2" width="19.9" height="31.799999999999997" rx="1.5"/></clipPath><g clip-path="url(#c30)"><rect x="8.00" y="2.00" width="21.90" height="31.80" rx="0" fill="#A5D6A7"/><rect x="8.00" y="7.00" width="21.90" height="26.80" rx="0" fill="#66BB6A"/><rect x="8.00" y="28.70" width="21.90" height="5.10" rx="0" fill="#A5D6A7"/></g><circle cx="18.60" cy="13.60" r="5.00" fill="#2E7D32"/><circle cx="12.30" cy="22.20" r="1.30" fill="#2E7D32"/><circle cx="12.30" cy="26.20" r="1.30" fill="#2E7D32"/></g></svg></div>
<div class="lb" style="left:792.7px;top:588px">Přijaté zálohy</div>
<div class="it" style="left:950px;top:550px"><svg width="38" height="36" viewBox="0 0 38 36"><g transform="translate(0.17,0)"><rect width="36" height="36" rx="5" fill="#fff"/><path d="M10.9 10.5 A6.9 6.5 0 0 1 24.5 10.5" fill="none" stroke="#4CAF50" stroke-width="1.6"/><clipPath id="c31"><rect x="3.8" y="8.9" width="27.599999999999998" height="22.799999999999997" rx="2"/></clipPath><g clip-path="url(#c31)"><rect x="2.80" y="8.90" width="29.60" height="22.80" rx="0" fill="#2E7D32"/><rect x="2.80" y="10.20" width="29.60" height="21.50" rx="0" fill="#4CAF50"/><rect x="2.80" y="17.60" width="29.60" height="14.10" rx="0" fill="#388E3C"/><rect x="2.80" y="24.70" width="29.60" height="7.00" rx="0" fill="#2E7D32"/></g></g></svg></div>
<div class="lb" style="left:908.2px;top:588px">Položky prodeje</div>
<div class="it" style="left:1065px;top:550px"><svg width="38" height="36" viewBox="0 0 38 36"><g transform="translate(0.63,0)"><rect width="36" height="36" rx="5" fill="#fff"/><rect x="3.80" y="4.20" width="27.10" height="27.20" rx="2.5" fill="#4CAF50"/><rect x="22.00" y="4.20" width="8.90" height="9.10" rx="2.5" fill="#81C784"/><rect x="3.80" y="13.90" width="18.20" height="17.50" rx="2.5" fill="#2E7D32"/><rect x="3.80" y="22.40" width="9.10" height="9.00" rx="2.5" fill="#1B5E20"/></g></svg></div>
<div class="lb" style="left:1023.6px;top:588px">Ostatní pohledávky</div>
<div class="it" style="left:1181px;top:550px"><svg width="38" height="36" viewBox="0 0 38 36"><g transform="translate(0.09,0)"><rect width="36" height="36" rx="5" fill="#fff"/><path d="M3.7 31.7 V14.5 Q3.7 4.2 14 4.2 H29.5 Q30.9 4.2 30.9 5.6 V31.7 Z" fill="#1B5E20"/><path d="M10.8 31.7 V11 Q10.8 4.2 17.6 4.2 H29.5 Q30.9 4.2 30.9 5.6 V31.7 Z" fill="#2E7D32"/><path d="M10.8 31.7 V17.5 Q10.8 11.1 17.2 11.1 H30.9 V31.7 Z" fill="#4CAF50"/><path d="M10.8 31.7 V24.2 Q10.8 17.8 17.2 17.8 H30.9 V30.3 Q30.9 31.7 29.5 31.7 Z" fill="#81C784"/></g></svg></div>
<div class="lb" style="left:1139.1px;top:588px">Smlouvy - prodej</div>
<div class="it" style="left:1296px;top:550px"><svg width="38" height="36" viewBox="0 0 38 36"><g transform="translate(0.55,0)"><rect width="36" height="36" rx="5" fill="#fff"/><path d="M3.7 31.7 V14.5 Q3.7 4.2 14 4.2 H29.5 Q30.9 4.2 30.9 5.6 V31.7 Z" fill="#1B5E20"/><path d="M10.8 31.7 V11 Q10.8 4.2 17.6 4.2 H29.5 Q30.9 4.2 30.9 5.6 V31.7 Z" fill="#2E7D32"/><path d="M10.8 31.7 V17.5 Q10.8 11.1 17.2 11.1 H30.9 V31.7 Z" fill="#4CAF50"/><path d="M10.8 31.7 V24.2 Q10.8 17.8 17.2 17.8 H30.9 V30.3 Q30.9 31.7 29.5 31.7 Z" fill="#81C784"/></g></svg></div>
<div class="lb" style="left:1254.5px;top:588px">Prodejka</div>
<div class="st" style="top:614px">05 Účetnictví a finance</div>
<div class="sl" style="top:633px"></div>
<div class="it" style="left:141px;top:643px"><svg width="38" height="36" viewBox="0 0 38 36"><g transform="translate(0.95,0)"><rect width="36" height="36" rx="5" fill="#fff"/><clipPath id="c32"><rect x="4.5" y="4.2" width="22.2" height="27.2" rx="2"/></clipPath><g clip-path="url(#c32)"><rect x="3.50" y="4.20" width="24.20" height="27.20" rx="0" fill="#F06292"/><rect x="3.50" y="11.60" width="24.20" height="19.80" rx="0" fill="#EC407A"/><rect x="3.50" y="17.80" width="24.20" height="13.60" rx="0" fill="#E91E63"/><rect x="3.50" y="24.40" width="24.20" height="7.00" rx="0" fill="#C2185B"/></g><circle cx="18.10" cy="18.10" r="7.60" fill="#AD1457"/><circle cx="23.20" cy="12.60" r="6.90" fill="#fff"/><circle cx="23.20" cy="12.60" r="6.30" fill="#E91E63"/><circle cx="26.00" cy="21.20" r="5.50" fill="#F48FB1"/></g></svg></div>
<div class="lb" style="left:99.9px;top:681px">Pokladní doklady</div>
<div class="it" style="left:257px;top:643px"><svg width="38" height="36" viewBox="0 0 38 36"><g transform="translate(0.41,0)"><rect width="36" height="36" rx="5" fill="#fff"/><clipPath id="c33"><rect x="12.3" y="4.2" width="19.099999999999998" height="27.2" rx="2"/></clipPath><g clip-path="url(#c33)"><rect x="11.30" y="4.20" width="21.10" height="27.20" rx="0" fill="#F06292"/><rect x="11.30" y="11.10" width="21.10" height="20.30" rx="0" fill="#EC407A"/><rect x="11.30" y="17.80" width="21.10" height="13.60" rx="0" fill="#E91E63"/><rect x="11.30" y="24.70" width="21.10" height="6.70" rx="0" fill="#C2185B"/></g><clipPath id="c34"><rect x="3.9" y="2" width="8.7" height="31.799999999999997" rx="2"/></clipPath><g clip-path="url(#c34)"><rect x="2.90" y="2.00" width="10.70" height="31.80" rx="0" fill="#F48FB1"/><rect x="2.90" y="11.10" width="10.70" height="22.70" rx="0" fill="#F06292"/><rect x="2.90" y="17.80" width="10.70" height="16.00" rx="0" fill="#AD1457"/><rect x="2.90" y="24.70" width="10.70" height="9.10" rx="0" fill="#880E4F"/></g></g></svg></div>
<div class="lb" style="left:215.4px;top:681px">Bankovní příkazy</div>
<div class="it" style="left:372px;top:643px"><svg width="38" height="36" viewBox="0 0 38 36"><g transform="translate(0.87,0)"><rect width="36" height="36" rx="5" fill="#fff"/><clipPath id="c35"><rect x="4" y="4.2" width="6.800000000000001" height="27.2" rx="2"/></clipPath><g clip-path="url(#c35)"><rect x="3.00" y="4.20" width="8.80" height="27.20" rx="0" fill="#C2185B"/><rect x="3.00" y="14.30" width="8.80" height="17.10" rx="0" fill="#880E4F"/><rect x="3.00" y="19.90" width="8.80" height="11.50" rx="0" fill="#C2185B"/></g><clipPath id="c36"><rect x="10.6" y="6.5" width="6.9" height="24.9" rx="2"/></clipPath><g clip-path="url(#c36)"><rect x="9.60" y="6.50" width="8.90" height="24.90" rx="0" fill="#E91E63"/><rect x="9.60" y="14.30" width="8.90" height="17.10" rx="0" fill="#AD1457"/><rect x="9.60" y="19.90" width="8.90" height="11.50" rx="0" fill="#E91E63"/></g><clipPath id="c37"><rect x="17.3" y="8.9" width="7.099999999999998" height="22.5" rx="2"/></clipPath><g clip-path="url(#c37)"><rect x="16.30" y="8.90" width="9.10" height="22.50" rx="0" fill="#EC407A"/><rect x="16.30" y="14.30" width="9.10" height="17.10" rx="0" fill="#F06292"/><rect x="16.30" y="19.90" width="9.10" height="11.50" rx="0" fill="#EC407A"/></g><clipPath id="c38"><rect x="24.2" y="11.1" width="6.699999999999999" height="20.299999999999997" rx="2"/></clipPath><g clip-path="url(#c38)"><rect x="23.20" y="11.10" width="8.70" height="20.30" rx="0" fill="#F06292"/><rect x="23.20" y="14.30" width="8.70" height="17.10" rx="0" fill="#F48FB1"/><rect x="23.20" y="19.90" width="8.70" height="11.50" rx="0" fill="#F06292"/></g></g></svg></div>
<div class="lb" style="left:330.9px;top:681px">Bankovní výpisy</div>
<div class="it" style="left:488px;top:643px"><svg width="38" height="36" viewBox="0 0 38 36"><g transform="translate(0.33,0)"><rect width="36" height="36" rx="5" fill="#fff"/><path d="M18 7.3 V28.9 Q18 29.6 17.3 29.7 L6.4 30.9 Q4.6 31.1 4.6 29.3 V6.7 Q4.6 4.9 6.4 5.1 L17.3 6.3 Q18 6.5 18 7.3 Z" fill="#F57F17"/><path d="M18.2 11.3 V7.2 Q18.2 6.5 19 6.3 L30 5 Q31.8 4.9 31.8 6.5 V11.3 Z" fill="#F9A825"/><rect x="18.20" y="11.30" width="11.00" height="6.60" rx="0" fill="#FBC02D"/><rect x="18.20" y="17.90" width="8.90" height="5.70" rx="0" fill="#FDD835"/><path d="M18.2 23.6 H29.8 V29.6 Q29.8 31 28.4 30.8 L19 29.8 Q18.2 29.7 18.2 28.9 Z" fill="#FFEE58"/></g></svg></div>
<div class="lb" style="left:446.3px;top:681px">Kniha Saldokonto</div>
<div class="it" style="left:603px;top:643px"><svg width="38" height="36" viewBox="0 0 38 36"><g transform="translate(0.79,0)"><rect width="36" height="36" rx="5" fill="#fff"/><polygon points="9.50,4.50 9.50,31.50 8.90,31.50 4.00,27.00 4.00,9.00 8.90,4.50" fill="#9C27B0"/><clipPath id="c39"><rect x="8.9" y="4.2" width="20.0" height="27.2" rx="2"/></clipPath><g clip-path="url(#c39)"><rect x="7.90" y="4.20" width="22.00" height="27.20" rx="0" fill="#CE93D8"/><rect x="7.90" y="18.10" width="22.00" height="13.30" rx="0" fill="#BA68C8"/></g><clipPath id="c40"><rect x="23" y="12.6" width="7.899999999999999" height="10.4" rx="1.5"/></clipPath><g clip-path="url(#c40)"><rect x="22.00" y="12.60" width="9.90" height="10.40" rx="0" fill="#AB47BC"/><rect x="22.00" y="18.10" width="9.90" height="4.90" rx="0" fill="#8E24AA"/></g></g></svg></div>
<div class="lb" style="left:561.8px;top:681px">Interní doklady</div>
<div class="it" style="left:719px;top:643px"><svg width="38" height="36" viewBox="0 0 38 36"><g transform="translate(0.25,0)"><rect width="36" height="36" rx="5" fill="#fff"/><clipPath id="c41"><rect x="24.4" y="0" width="12" height="36"/></clipPath><g clip-path="url(#c41)"><polygon points="25.43,11.58 26.27,10.01 28.79,11.06 28.28,12.76 29.74,14.22 31.44,13.71 32.49,16.23 30.92,17.07 30.92,19.13 32.49,19.97 31.44,22.49 29.74,21.98 28.28,23.44 28.79,25.14 26.27,26.19 25.43,24.62 23.37,24.62 22.53,26.19 20.01,25.14 20.52,23.44 19.06,21.98 17.36,22.49 16.31,19.97 17.88,19.13 17.88,17.07 16.31,16.23 17.36,13.71 19.06,14.22 20.52,12.76 20.01,11.06 22.53,10.01 23.37,11.58" fill="#9C27B0" stroke="#9C27B0" stroke-width="0.8" stroke-linejoin="round"/><circle cx="24.40" cy="18.10" r="4.00" fill="#fff"/></g><polygon points="4.70,2.00 1.70,5.00 1.70,30.80 4.70,33.80" fill="#BA68C8"/><rect x="2.70" y="7.00" width="2.00" height="21.70" rx="0" fill="#9C27B0"/><clipPath id="c42"><rect x="4.7" y="2" width="19.7" height="31.799999999999997" rx="1.5"/></clipPath><g clip-path="url(#c42)"><rect x="3.70" y="2.00" width="21.70" height="31.80" rx="0" fill="#CE93D8"/><rect x="3.70" y="7.00" width="21.70" height="26.80" rx="0" fill="#BA68C8"/><rect x="3.70" y="28.70" width="21.70" height="5.10" rx="0" fill="#CE93D8"/></g><circle cx="14.10" cy="13.60" r="5.00" fill="#8E24AA"/><circle cx="7.90" cy="22.20" r="1.30" fill="#8E24AA"/><circle cx="7.90" cy="26.20" r="1.30" fill="#8E24AA"/></g></svg></div>
<div class="lb" style="left:677.2px;top:681px">Řízení financí</div>
<div class="it" style="left:834px;top:643px"><svg width="38" height="36" viewBox="0 0 38 36"><g transform="translate(0.71,0)"><rect width="36" height="36" rx="5" fill="#fff"/><clipPath id="c43"><rect x="6" y="4.2" width="22.9" height="27.2" rx="2"/></clipPath><g clip-path="url(#c43)"><rect x="5.00" y="4.20" width="24.90" height="27.20" rx="0" fill="#8E24AA"/><rect x="5.00" y="11.20" width="24.90" height="20.20" rx="0" fill="#AB47BC"/><rect x="5.00" y="17.80" width="24.90" height="13.60" rx="0" fill="#BA68C8"/><rect x="5.00" y="24.20" width="24.90" height="7.20" rx="0" fill="#CE93D8"/></g><rect x="5.50" y="11.10" width="24.00" height="0.50" rx="0" fill="#fff"/><circle cx="9.60" cy="7.60" r="1.30" fill="#6A1B9A"/><circle cx="9.60" cy="14.60" r="1.30" fill="#8E24AA"/><circle cx="9.60" cy="21.20" r="1.30" fill="#AB47BC"/><circle cx="9.60" cy="28.00" r="1.30" fill="#BA68C8"/></g></svg></div>
<div class="lb" style="left:792.7px;top:681px">Položky účetního ...</div>
<div class="it" style="left:950px;top:643px"><svg width="38" height="36" viewBox="0 0 38 36"><g transform="translate(0.17,0)"><rect width="36" height="36" rx="5" fill="#fff"/><clipPath id="c44"><rect x="20" y="4.2" width="8.600000000000001" height="27.2" rx="2"/></clipPath><g clip-path="url(#c44)"><rect x="19.00" y="4.20" width="10.60" height="27.20" rx="0" fill="#8E24AA"/><rect x="19.00" y="11.10" width="10.60" height="20.30" rx="0" fill="#AB47BC"/><rect x="19.00" y="17.80" width="10.60" height="13.60" rx="0" fill="#BA68C8"/><rect x="19.00" y="24.40" width="10.60" height="7.00" rx="0" fill="#CE93D8"/></g><path d="M22.9 4.2 V31.4 H8.2 Q6 31.4 6 29.2 V6.4 Q6 4.2 8.2 4.2 Z" fill="#6A1B9A"/></g></svg></div>
<div class="lb" style="left:908.2px;top:681px">Účetní deník</div>
<div class="it" style="left:1065px;top:643px"><svg width="38" height="36" viewBox="0 0 38 36"><g transform="translate(0.63,0)"><rect width="36" height="36" rx="5" fill="#fff"/><g transform="translate(-0.8,0)"><rect x="23.00" y="7.00" width="6.80" height="22.70" rx="1.5" fill="#CE93D8"/><rect x="19.00" y="4.50" width="6.80" height="26.70" rx="1.5" fill="#BA68C8"/><polygon points="6.80,7.00 20.00,3.00 21.00,3.30 21.00,32.40 20.00,32.70 6.80,28.20" fill="#AB47BC"/><polygon points="6.80,7.00 8.60,6.40 8.60,28.80 6.80,28.20" fill="#9C27B0"/></g></g></svg></div>
<div class="lb" style="left:1023.6px;top:681px">Hlavní kniha</div>
<div class="it" style="left:1181px;top:643px"><svg width="38" height="36" viewBox="0 0 38 36"><g transform="translate(0.09,0)"><rect width="36" height="36" rx="5" fill="#fff"/><rect x="8.00" y="4.20" width="18.40" height="6.70" rx="1.5" fill="#8E24AA"/><rect x="8.00" y="11.30" width="22.90" height="6.50" rx="1.5" fill="#AB47BC"/><rect x="8.00" y="17.80" width="16.00" height="6.60" rx="1.5" fill="#BA68C8"/><rect x="8.00" y="24.40" width="12.00" height="7.30" rx="1.5" fill="#CE93D8"/><rect x="6.20" y="4.20" width="4.70" height="27.50" rx="2" fill="#6A1B9A"/></g></svg></div>
<div class="lb" style="left:1139.1px;top:681px">Řádky ek. analýz</div>
<div class="st" style="top:707px">06 Výroba</div>
<div class="sl" style="top:726px"></div>
<div class="it" style="left:141px;top:736px"><svg width="38" height="36" viewBox="0 0 38 36"><g transform="translate(0.95,0)"><rect width="36" height="36" rx="5" fill="#fff"/><polygon points="8.00,4.50 8.00,31.50 7.60,31.50 2.50,26.50 2.50,9.50 7.60,4.50" fill="#FF7043"/><rect x="7.60" y="4.20" width="19.10" height="27.20" rx="2" fill="#FFAB91"/><clipPath id="c45"><rect x="16.6" y="10" width="14.799999999999997" height="15.7" rx="1.5"/></clipPath><g clip-path="url(#c45)"><rect x="15.60" y="10.00" width="16.80" height="15.70" rx="0" fill="#BF360C"/><rect x="15.60" y="15.10" width="16.80" height="10.60" rx="0" fill="#F4511E"/><rect x="15.60" y="20.70" width="16.80" height="5.00" rx="0" fill="#FF7043"/></g></g></svg></div>
<div class="lb" style="left:99.9px;top:774px">Variantní TP</div>
<div class="it" style="left:257px;top:736px"><svg width="38" height="36" viewBox="0 0 38 36"><g transform="translate(0.41,0)"><rect width="36" height="36" rx="5" fill="#fff"/><polygon points="17.80,5.00 29.70,11.60 29.70,24.40 17.80,30.70 12.00,27.00 12.00,9.00" fill="#F4511E"/><circle cx="17.80" cy="17.90" r="5.00" fill="#fff"/><rect x="4.50" y="6.90" width="13.30" height="6.70" rx="2" fill="#FF7043"/><rect x="4.50" y="14.30" width="13.30" height="6.90" rx="2" fill="#F4511E"/><rect x="4.50" y="22.00" width="13.30" height="7.00" rx="2" fill="#BF360C"/></g></svg></div>
<div class="lb" style="left:215.4px;top:774px">Operace</div>
<div class="it" style="left:372px;top:736px"><svg width="38" height="36" viewBox="0 0 38 36"><g transform="translate(0.87,0)"><rect width="36" height="36" rx="5" fill="#fff"/><rect x="4.00" y="4.20" width="26.90" height="27.20" rx="2.5" fill="#FFAB91"/><rect x="4.00" y="13.60" width="18.00" height="17.80" rx="2.5" fill="#F4511E"/><rect x="4.00" y="22.70" width="8.90" height="8.70" rx="2.5" fill="#BF360C"/></g></svg></div>
<div class="lb" style="left:330.9px;top:774px">Zdroje</div>
<div class="it" style="left:488px;top:736px"><svg width="38" height="36" viewBox="0 0 38 36"><g transform="translate(0.33,0)"><rect width="36" height="36" rx="5" fill="#fff"/><clipPath id="c46"><rect x="4" y="6.2" width="27.2" height="25.2" rx="2"/></clipPath><g clip-path="url(#c46)"><rect x="3.00" y="6.20" width="29.20" height="25.20" rx="0" fill="#BF360C"/><rect x="3.00" y="10.00" width="29.20" height="21.40" rx="0" fill="#F4511E"/><rect x="3.00" y="17.10" width="29.20" height="14.30" rx="0" fill="#FF7043"/><rect x="3.00" y="24.20" width="29.20" height="7.20" rx="0" fill="#FFAB91"/></g><circle cx="10.10" cy="6.20" r="1.70" fill="#F4511E"/><circle cx="25.00" cy="6.20" r="1.70" fill="#F4511E"/></g></svg></div>
<div class="lb" style="left:446.3px;top:774px">Kalendáře</div>
<div class="it" style="left:603px;top:736px"><svg width="38" height="36" viewBox="0 0 38 36"><g transform="translate(0.79,0)"><rect width="36" height="36" rx="5" fill="#fff"/><rect x="20.00" y="6.90" width="8.90" height="22.10" rx="1.5" fill="#BF360C"/><rect x="4.00" y="7.00" width="5.00" height="22.00" rx="1.5" fill="#BF360C"/><clipPath id="c47"><rect x="7" y="4.2" width="14.7" height="27.2" rx="2"/></clipPath><g clip-path="url(#c47)"><rect x="6.00" y="4.20" width="16.70" height="27.20" rx="0" fill="#FF7043"/><rect x="6.00" y="17.90" width="16.70" height="13.50" rx="0" fill="#F4511E"/></g><polygon points="21.40,28.20 12.48,23.05 12.48,12.75 21.40,7.60 30.32,12.75 30.32,23.05" fill="#FFAB91"/><circle cx="21.40" cy="17.90" r="4.50" fill="#F4511E"/><clipPath id="c48"><rect x="21.4" y="0" width="15" height="36"/></clipPath><g clip-path="url(#c48)"><circle cx="21.40" cy="17.90" r="4.50" fill="#BF360C"/></g></g></svg></div>
<div class="lb" style="left:561.8px;top:774px">Průvodky</div>
<div class="it" style="left:719px;top:736px"><svg width="38" height="36" viewBox="0 0 38 36"><g transform="translate(0.25,0)"><rect width="36" height="36" rx="5" fill="#fff"/><clipPath id="c49"><rect x="12.6" y="4.2" width="18.1" height="27.2" rx="2"/></clipPath><g clip-path="url(#c49)"><rect x="11.60" y="4.20" width="20.10" height="27.20" rx="0" fill="#FFAB91"/><rect x="11.60" y="11.60" width="20.10" height="19.80" rx="0" fill="#FF7043"/><rect x="11.60" y="17.80" width="20.10" height="13.60" rx="0" fill="#F4511E"/><rect x="11.60" y="24.40" width="20.10" height="7.00" rx="0" fill="#BF360C"/></g><clipPath id="c50"><rect x="4" y="8.1" width="13.600000000000001" height="19.299999999999997" rx="2"/></clipPath><g clip-path="url(#c50)"><rect x="3.00" y="8.10" width="15.60" height="19.30" rx="0" fill="#BF360C"/><rect x="3.00" y="12.60" width="15.60" height="14.80" rx="0" fill="#F4511E"/><rect x="3.00" y="17.60" width="15.60" height="9.80" rx="0" fill="#FF7043"/><rect x="3.00" y="22.50" width="15.60" height="4.90" rx="0" fill="#FFAB91"/></g></g></svg></div>
<div class="lb" style="left:677.2px;top:774px">Výrobní příkazy</div>
<div class="it" style="left:834px;top:736px"><svg width="38" height="36" viewBox="0 0 38 36"><g transform="translate(0.71,0)"><rect width="36" height="36" rx="5" fill="#fff"/><clipPath id="c51"><rect x="17.7" y="4.3" width="13.2" height="26.7" rx="2"/></clipPath><g clip-path="url(#c51)"><rect x="16.70" y="4.30" width="15.20" height="26.70" rx="0" fill="#FF7043"/><rect x="16.70" y="11.60" width="15.20" height="19.40" rx="0" fill="#F4511E"/><rect x="16.70" y="18.00" width="15.20" height="13.00" rx="0" fill="#E64A19"/><rect x="16.70" y="24.40" width="15.20" height="6.60" rx="0" fill="#BF360C"/></g><polygon points="15.86,9.12 16.03,7.17 18.57,7.17 18.74,9.12 20.45,9.57 21.56,7.98 23.76,9.25 22.94,11.01 24.19,12.26 25.95,11.44 27.22,13.64 25.63,14.75 26.08,16.46 28.03,16.63 28.03,19.17 26.08,19.34 25.63,21.05 27.22,22.16 25.95,24.36 24.19,23.54 22.94,24.79 23.76,26.55 21.56,27.82 20.45,26.23 18.74,26.68 18.57,28.63 16.03,28.63 15.86,26.68 14.15,26.23 13.04,27.82 10.84,26.55 11.66,24.79 10.41,23.54 8.65,24.36 7.38,22.16 8.97,21.05 8.52,19.34 6.57,19.17 6.57,16.63 8.52,16.46 8.97,14.75 7.38,13.64 8.65,11.44 10.41,12.26 11.66,11.01 10.84,9.25 13.04,7.98 14.15,9.57" fill="#FFAB91" stroke="#FFAB91" stroke-width="0.8" stroke-linejoin="round"/><clipPath id="c52"><circle cx="17.3" cy="17.9" r="5.05"/></clipPath><g clip-path="url(#c52)"><rect x="10.00" y="10.00" width="7.50" height="16.00" rx="0" fill="#fff"/><rect x="17.50" y="10.00" width="8.50" height="8.00" rx="0" fill="#F4511E"/><rect x="17.50" y="18.00" width="8.50" height="8.00" rx="0" fill="#E64A19"/></g></g></svg></div>
<div class="lb" style="left:792.7px;top:774px">Položky výroby</div>
<div class="it" style="left:950px;top:736px"><svg width="38" height="36" viewBox="0 0 38 36"><g transform="translate(0.17,0)"><rect width="36" height="36" rx="5" fill="#fff"/><clipPath id="c53"><polygon points="18.96,7.43 20.24,5.24 24.18,6.87 23.53,9.32 25.88,11.67 28.33,11.02 29.96,14.96 27.77,16.24 27.77,19.56 29.96,20.84 28.33,24.78 25.88,24.13 23.53,26.48 24.18,28.93 20.24,30.56 18.96,28.37 15.64,28.37 14.36,30.56 10.42,28.93 11.07,26.48 8.72,24.13 6.27,24.78 4.64,20.84 6.83,19.56 6.83,16.24 4.64,14.96 6.27,11.02 8.72,11.67 11.07,9.32 10.42,6.87 14.36,5.24 15.64,7.43" fill="#000" stroke="#000" stroke-width="0.8" stroke-linejoin="round"/></clipPath><g clip-path="url(#c53)"><rect x="0.00" y="0.00" width="17.30" height="17.90" rx="0" fill="#BF360C"/><rect x="17.30" y="0.00" width="18.70" height="17.90" rx="0" fill="#FFAB91"/><rect x="0.00" y="17.90" width="17.30" height="18.10" rx="0" fill="#F4511E"/><rect x="17.30" y="17.90" width="18.70" height="18.10" rx="0" fill="#FF7043"/><rect x="16.90" y="17.90" width="0.80" height="18.10" rx="0" fill="#fff"/></g><circle cx="17.30" cy="17.90" r="5.50" fill="#fff"/></g></svg></div>
<div class="lb" style="left:908.2px;top:774px">Výroba po druzích</div>
<div class="it" style="left:1065px;top:736px"><svg width="38" height="36" viewBox="0 0 38 36"><g transform="translate(0.63,0)"><rect width="36" height="36" rx="5" fill="#fff"/><rect x="17.90" y="4.50" width="13.60" height="6.60" rx="3.3" fill="#BF360C"/><rect x="2.00" y="11.30" width="21.20" height="6.50" rx="3.3" fill="#F4511E"/><rect x="12.70" y="18.10" width="18.80" height="6.60" rx="3.3" fill="#FF7043"/><rect x="4.00" y="25.00" width="21.50" height="6.40" rx="3.2" fill="#E64A19"/></g></svg></div>
<div class="lb" style="left:1023.6px;top:774px">Operace průvodek</div>
<div class="it" style="left:1181px;top:736px"><svg width="38" height="36" viewBox="0 0 38 36"><g transform="translate(0.09,0)"><rect width="36" height="36" rx="5" fill="#fff"/><clipPath id="c46"><rect x="4" y="6.2" width="27.2" height="25.2" rx="2"/></clipPath><g clip-path="url(#c46)"><rect x="3.00" y="6.20" width="29.20" height="25.20" rx="0" fill="#BF360C"/><rect x="3.00" y="10.00" width="29.20" height="21.40" rx="0" fill="#F4511E"/><rect x="3.00" y="17.10" width="29.20" height="14.30" rx="0" fill="#FF7043"/><rect x="3.00" y="24.20" width="29.20" height="7.20" rx="0" fill="#FFAB91"/></g><circle cx="10.10" cy="6.20" r="1.70" fill="#F4511E"/><circle cx="25.00" cy="6.20" r="1.70" fill="#F4511E"/></g></svg></div>
<div class="lb" style="left:1139.1px;top:774px">Kalkulace</div>
<div class="st" style="top:800px">07 Web a e-shop</div>
<div class="sl" style="top:819px"></div>
<div class="it" style="left:141px;top:829px"><svg width="38" height="36" viewBox="0 0 38 36"><g transform="translate(0.95,0)"><rect width="36" height="36" rx="5" fill="#fff"/><clipPath id="c54"><path d="M7 4.2 H21.5 L23.7 6.4 V29.2 L21.5 31.4 H7 L4.5 28.9 V6.7 Z"/></clipPath><g clip-path="url(#c54)"><rect x="4.50" y="4.20" width="19.50" height="6.90" rx="0" fill="#E57373"/><rect x="4.50" y="11.10" width="19.50" height="6.70" rx="0" fill="#EF5350"/><rect x="4.50" y="17.80" width="19.50" height="13.60" rx="0" fill="#D32F2F"/><rect x="4.50" y="4.00" width="2.00" height="28.00" rx="0" fill="#C62828"/></g><clipPath id="c55"><rect x="18.1" y="6.5" width="11.299999999999997" height="23.2" rx="2"/></clipPath><g clip-path="url(#c55)"><rect x="17.10" y="6.50" width="13.30" height="23.20" rx="0" fill="#B71C1C"/><rect x="17.10" y="11.90" width="13.30" height="17.80" rx="0" fill="#D32F2F"/><rect x="17.10" y="17.80" width="13.30" height="11.90" rx="0" fill="#EF5350"/><rect x="17.10" y="23.70" width="13.30" height="6.00" rx="0" fill="#E57373"/></g></g></svg></div>
<div class="lb" style="left:99.9px;top:867px">Weby a e-shopy</div>
<div class="it" style="left:257px;top:829px"><svg width="38" height="36" viewBox="0 0 38 36"><g transform="translate(0.41,0)"><rect width="36" height="36" rx="5" fill="#fff"/><rect x="20.00" y="6.90" width="9.10" height="22.10" rx="1.5" fill="#EF9A9A"/><clipPath id="c56"><rect x="4.5" y="4.2" width="18.6" height="27.2" rx="2"/></clipPath><g clip-path="url(#c56)"><rect x="3.50" y="4.20" width="20.60" height="27.20" rx="0" fill="#B71C1C"/><rect x="3.50" y="11.20" width="20.60" height="20.20" rx="0" fill="#D32F2F"/><rect x="3.50" y="17.80" width="20.60" height="13.60" rx="0" fill="#F44336"/><rect x="3.50" y="24.30" width="20.60" height="7.10" rx="0" fill="#EF5350"/></g><rect x="4.00" y="11.10" width="19.50" height="0.50" rx="0" fill="#fff"/><rect x="4.00" y="24.20" width="19.50" height="0.30" rx="0" fill="#fff"/><circle cx="8.30" cy="7.60" r="1.30" fill="#EF9A9A"/><circle cx="8.30" cy="14.60" r="1.30" fill="#EF9A9A"/><circle cx="8.30" cy="21.20" r="1.30" fill="#EF9A9A"/><circle cx="8.30" cy="28.00" r="1.30" fill="#EF9A9A"/></g></svg></div>
<div class="lb" style="left:215.4px;top:867px">Kategorie - strom</div>
<div class="it" style="left:372px;top:829px"><svg width="38" height="36" viewBox="0 0 38 36"><g transform="translate(0.87,0)"><rect width="36" height="36" rx="5" fill="#fff"/><rect x="5.80" y="4.20" width="24.10" height="6.70" rx="2" fill="#B71C1C"/><rect x="4.00" y="12.60" width="27.00" height="5.80" rx="0" fill="#F44336"/><clipPath id="c57"><rect x="5.8" y="20.2" width="24.099999999999998" height="11.2" rx="2"/></clipPath><g clip-path="url(#c57)"><rect x="4.80" y="20.20" width="26.10" height="11.20" rx="0" fill="#EF5350"/><rect x="4.80" y="25.40" width="26.10" height="6.00" rx="0" fill="#EF9A9A"/></g></g></svg></div>
<div class="lb" style="left:330.9px;top:867px">Menu webu</div>
<div class="it" style="left:488px;top:829px"><svg width="38" height="36" viewBox="0 0 38 36"><g transform="translate(0.33,0)"><rect width="36" height="36" rx="5" fill="#fff"/><polygon points="9.00,7.00 9.00,30.00 6.30,27.50 6.30,9.00" fill="#E53935"/><rect x="8.60" y="4.20" width="20.30" height="27.20" rx="2" fill="#EF9A9A"/><rect x="11.10" y="7.20" width="15.10" height="2.40" rx="1.2" fill="#B71C1C"/><rect x="11.10" y="12.70" width="15.10" height="2.40" rx="1.2" fill="#C62828"/><rect x="11.10" y="18.20" width="15.10" height="2.40" rx="1.2" fill="#F44336"/><rect x="11.10" y="24.00" width="10.60" height="2.40" rx="1.2" fill="#E57373"/></g></svg></div>
<div class="lb" style="left:446.3px;top:867px">Textové stránky</div>
<div class="it" style="left:603px;top:829px"><svg width="38" height="36" viewBox="0 0 38 36"><g transform="translate(0.79,0)"><rect width="36" height="36" rx="5" fill="#fff"/><rect x="8.10" y="6.00" width="19.30" height="10.30" rx="1.5" fill="#B71C1C"/><rect x="8.10" y="18.10" width="8.80" height="3.90" rx="1.5" fill="#F44336"/><rect x="8.10" y="24.00" width="8.80" height="5.70" rx="1.5" fill="#EF5350"/><rect x="18.30" y="18.10" width="9.10" height="11.60" rx="1.5" fill="#D32F2F"/></g></svg></div>
<div class="lb" style="left:561.8px;top:867px">Bannery</div>
<div class="it" style="left:719px;top:829px"><svg width="38" height="36" viewBox="0 0 38 36"><g transform="translate(0.25,0)"><rect width="36" height="36" rx="5" fill="#fff"/><rect x="8.10" y="10.00" width="17.60" height="14.20" rx="2" fill="#EF9A9A"/><rect x="4.00" y="4.50" width="13.60" height="13.40" rx="2.5" fill="#B71C1C"/><rect x="19.60" y="7.40" width="11.30" height="11.20" rx="2.5" fill="#F44336"/><rect x="10.10" y="20.00" width="7.50" height="7.20" rx="2.2" fill="#F44336"/><rect x="19.60" y="21.00" width="9.80" height="9.20" rx="2.2" fill="#E57373"/></g></svg></div>
<div class="lb" style="left:677.2px;top:867px">Novinky webu</div>
<div class="it" style="left:834px;top:829px"><svg width="38" height="36" viewBox="0 0 38 36"><g transform="translate(0.71,0)"><rect width="36" height="36" rx="5" fill="#fff"/><rect x="4.00" y="4.50" width="8.10" height="8.10" rx="2.2" fill="#B71C1C"/><rect x="4.00" y="14.10" width="8.10" height="7.60" rx="2.2" fill="#E53935"/><rect x="4.00" y="23.40" width="8.10" height="7.80" rx="2.2" fill="#E57373"/><rect x="14.30" y="4.50" width="16.70" height="2.00" rx="1" fill="#D32F2F"/><rect x="14.30" y="8.60" width="14.40" height="2.00" rx="1" fill="#D32F2F"/><rect x="14.30" y="14.10" width="16.70" height="2.00" rx="1" fill="#E53935"/><rect x="14.30" y="17.90" width="14.40" height="2.00" rx="1" fill="#E53935"/><rect x="14.30" y="23.20" width="16.70" height="2.00" rx="1" fill="#EF9A9A"/><rect x="14.30" y="27.40" width="14.40" height="2.00" rx="1" fill="#EF9A9A"/></g></svg></div>
<div class="lb" style="left:792.7px;top:867px">Blogy</div>
<div class="it" style="left:950px;top:829px"><svg width="38" height="36" viewBox="0 0 38 36"><g transform="translate(0.17,0)"><rect width="36" height="36" rx="5" fill="#fff"/><clipPath id="c58"><path d="M9.6 4.2 H15 Q15.6 4.2 16 4.7 L17.3 6.6 L18.6 4.7 Q19 4.2 19.6 4.2 H25.1 Q26.7 4.2 26.7 5.8 V29.8 Q26.7 31.4 25.1 31.4 H19.6 Q19 31.4 18.6 30.9 L17.3 29.1 L16 30.9 Q15.6 31.4 15 31.4 H9.6 Q8 31.4 8 29.8 V5.8 Q8 4.2 9.6 4.2 Z"/></clipPath><g clip-path="url(#c58)"><rect x="7.00" y="4.00" width="20.00" height="28.00" rx="0" fill="#EF5350"/><rect x="7.00" y="11.60" width="20.00" height="20.40" rx="0" fill="#F44336"/><rect x="7.00" y="17.80" width="20.00" height="14.20" rx="0" fill="#D32F2F"/><rect x="7.00" y="24.40" width="20.00" height="7.60" rx="0" fill="#B71C1C"/><rect x="7.00" y="11.30" width="20.00" height="0.60" rx="0" fill="#f07270"/><rect x="7.00" y="24.10" width="20.00" height="0.60" rx="0" fill="#de5a58"/></g><circle cx="23.40" cy="19.10" r="5.20" fill="#B71C1C"/><circle cx="25.30" cy="15.20" r="4.15" fill="#D32F2F"/><circle cx="27.40" cy="21.30" r="3.30" fill="#F44336"/></g></svg></div>
<div class="lb" style="left:908.2px;top:867px">Slevové kupóny</div>
<div class="it" style="left:1065px;top:829px"><svg width="38" height="36" viewBox="0 0 38 36"><g transform="translate(0.63,0)"><rect width="36" height="36" rx="5" fill="#fff"/><circle cx="18.00" cy="17.80" r="4.00" fill="#D32F2F"/><circle cx="18.00" cy="10.60" r="6.50" fill="#B71C1C"/><circle cx="23.09" cy="12.71" r="6.50" fill="#C62828"/><circle cx="25.20" cy="17.80" r="6.50" fill="#D32F2F"/><circle cx="23.09" cy="22.89" r="6.50" fill="#E53935"/><circle cx="18.00" cy="25.00" r="6.50" fill="#F44336"/><circle cx="12.91" cy="22.89" r="6.50" fill="#EF5350"/><circle cx="10.80" cy="17.80" r="6.50" fill="#E57373"/><circle cx="12.91" cy="12.71" r="6.50" fill="#EF9A9A"/></g></svg></div>
<div class="lb" style="left:1023.6px;top:867px">Promo akce</div>
<div class="it" style="left:1181px;top:829px"><svg width="38" height="36" viewBox="0 0 38 36"><g transform="translate(0.09,0)"><rect width="36" height="36" rx="5" fill="#fff"/><circle cx="17.60" cy="9.60" r="5.00" fill="#B71C1C"/><circle cx="22.70" cy="12.60" r="3.50" fill="#EF5350"/><clipPath id="c59"><rect x="4.2" y="12.6" width="26.8" height="18.8" rx="2"/></clipPath><g clip-path="url(#c59)"><rect x="4.00" y="12.60" width="6.90" height="19.40" rx="0" fill="#EF5350"/><rect x="10.90" y="12.60" width="6.70" height="19.40" rx="0" fill="#F44336"/><rect x="17.60" y="12.60" width="7.10" height="19.40" rx="0" fill="#D32F2F"/><rect x="24.70" y="12.60" width="7.30" height="19.40" rx="0" fill="#B71C1C"/><rect x="10.70" y="12.60" width="0.40" height="19.40" rx="0" fill="#f9b0ae"/><rect x="17.40" y="12.60" width="0.40" height="19.40" rx="0" fill="#f9b0ae"/><rect x="24.50" y="12.60" width="0.40" height="19.40" rx="0" fill="#f0a0a0"/></g></g></svg></div>
<div class="lb" style="left:1139.1px;top:867px">Věrnostní programy</div>
<svg style="position:absolute;left:0;top:0" width="1588" height="160" viewBox="0 0 1588 160"><rect x="108.1" y="42" width="26" height="26" rx="5.6" fill="#000"/><rect x="120.00" y="47.00" width="3.20" height="16.10" fill="#fff"/><polygon points="118.00,47.30 120.30,47.00 120.30,50.20 118.00,50.20" fill="#fff"/><line x1="121.5" y1="70" x2="121.5" y2="110.4" stroke="#000" stroke-width="1.5"/><rect x="150.0" y="42" width="26" height="26" rx="5.6" fill="#000"/><rect x="159.20" y="47.00" width="7.90" height="2.10" fill="#fff"/><rect x="159.20" y="47.00" width="2.90" height="5.20" fill="#fff"/><rect x="164.20" y="47.00" width="2.90" height="6.60" fill="#fff"/><polygon points="164.20,53.00 167.10,53.60 162.10,61.40 159.20,61.40" fill="#fff"/><rect x="159.20" y="61.40" width="7.90" height="1.70" fill="#fff"/><line x1="163.3" y1="70" x2="163.3" y2="110.4" stroke="#000" stroke-width="1.5"/><rect x="191.0" y="42" width="26" height="26" rx="5.6" fill="#000"/><rect x="199.70" y="46.90" width="8.40" height="2.10" fill="#fff"/><rect x="199.70" y="46.90" width="2.90" height="4.00" fill="#fff"/><rect x="205.20" y="46.90" width="2.90" height="16.20" fill="#fff"/><rect x="203.00" y="53.70" width="5.10" height="1.90" fill="#fff"/><rect x="199.70" y="61.00" width="8.40" height="2.10" fill="#fff"/><rect x="199.70" y="58.10" width="2.90" height="5.00" fill="#fff"/><line x1="204.5" y1="70" x2="204.5" y2="110.4" stroke="#000" stroke-width="1.5"/><rect x="232.0" y="42" width="26" height="26" rx="5.6" fill="#000"/><polygon points="245.40,46.90 248.00,46.90 242.70,60.10 240.10,60.10" fill="#fff"/><rect x="240.10" y="57.70" width="9.80" height="2.40" fill="#fff"/><rect x="245.50" y="53.20" width="3.20" height="9.90" fill="#fff"/><line x1="245.5" y1="70" x2="245.5" y2="110.4" stroke="#000" stroke-width="1.5"/><rect x="273.0" y="42" width="26" height="26" rx="5.6" fill="#000"/><rect x="282.20" y="46.90" width="7.80" height="2.10" fill="#fff"/><rect x="282.20" y="46.90" width="2.90" height="8.60" fill="#fff"/><rect x="282.20" y="53.50" width="7.80" height="2.00" fill="#fff"/><rect x="287.10" y="53.50" width="2.90" height="9.60" fill="#fff"/><rect x="282.20" y="61.00" width="7.80" height="2.10" fill="#fff"/><rect x="282.20" y="58.50" width="2.90" height="4.60" fill="#fff"/><line x1="286.0" y1="70" x2="286.0" y2="110.4" stroke="#000" stroke-width="1.5"/><rect x="846.1" y="44.1" width="26" height="26" rx="5.6" fill="#000"/><rect x="855.90" y="50.10" width="2.90" height="16.00" fill="#fff"/><rect x="855.90" y="50.10" width="8.20" height="2.05" fill="#fff"/><rect x="861.00" y="50.10" width="3.10" height="5.60" fill="#fff"/><rect x="855.90" y="56.75" width="8.20" height="2.25" fill="#fff"/><rect x="861.00" y="56.75" width="3.10" height="9.35" fill="#fff"/><rect x="855.90" y="63.90" width="8.20" height="2.20" fill="#fff"/><line x1="859.6" y1="72" x2="859.6" y2="89.4" stroke="#000" stroke-width="1.5"/><rect x="1415.0" y="42" width="26" height="26" rx="5.6" fill="#000"/><rect x="1423.90" y="47.00" width="8.20" height="2.50" fill="#fff"/><polygon points="1428.90,49.00 1432.10,49.00 1432.10,50.60 1427.90,63.00 1424.80,63.00" fill="#fff"/><line x1="1428.5" y1="70" x2="1428.5" y2="110.4" stroke="#000" stroke-width="1.5"/><rect x="1454.0" y="42" width="26" height="26" rx="5.6" fill="#000"/><rect x="1462.90" y="47.00" width="3.10" height="16.00" fill="#fff"/><rect x="1468.40" y="47.00" width="3.10" height="16.00" fill="#fff"/><rect x="1462.90" y="47.00" width="8.60" height="2.00" fill="#fff"/><rect x="1462.90" y="53.80" width="8.60" height="1.80" fill="#fff"/><rect x="1462.90" y="60.50" width="8.60" height="2.50" fill="#fff"/><line x1="1467.4" y1="70" x2="1467.4" y2="110.4" stroke="#000" stroke-width="1.5"/><line x1="312.6" y1="89.4" x2="1407" y2="89.4" stroke="#333" stroke-width="1.6"/></svg>
</body></html>
